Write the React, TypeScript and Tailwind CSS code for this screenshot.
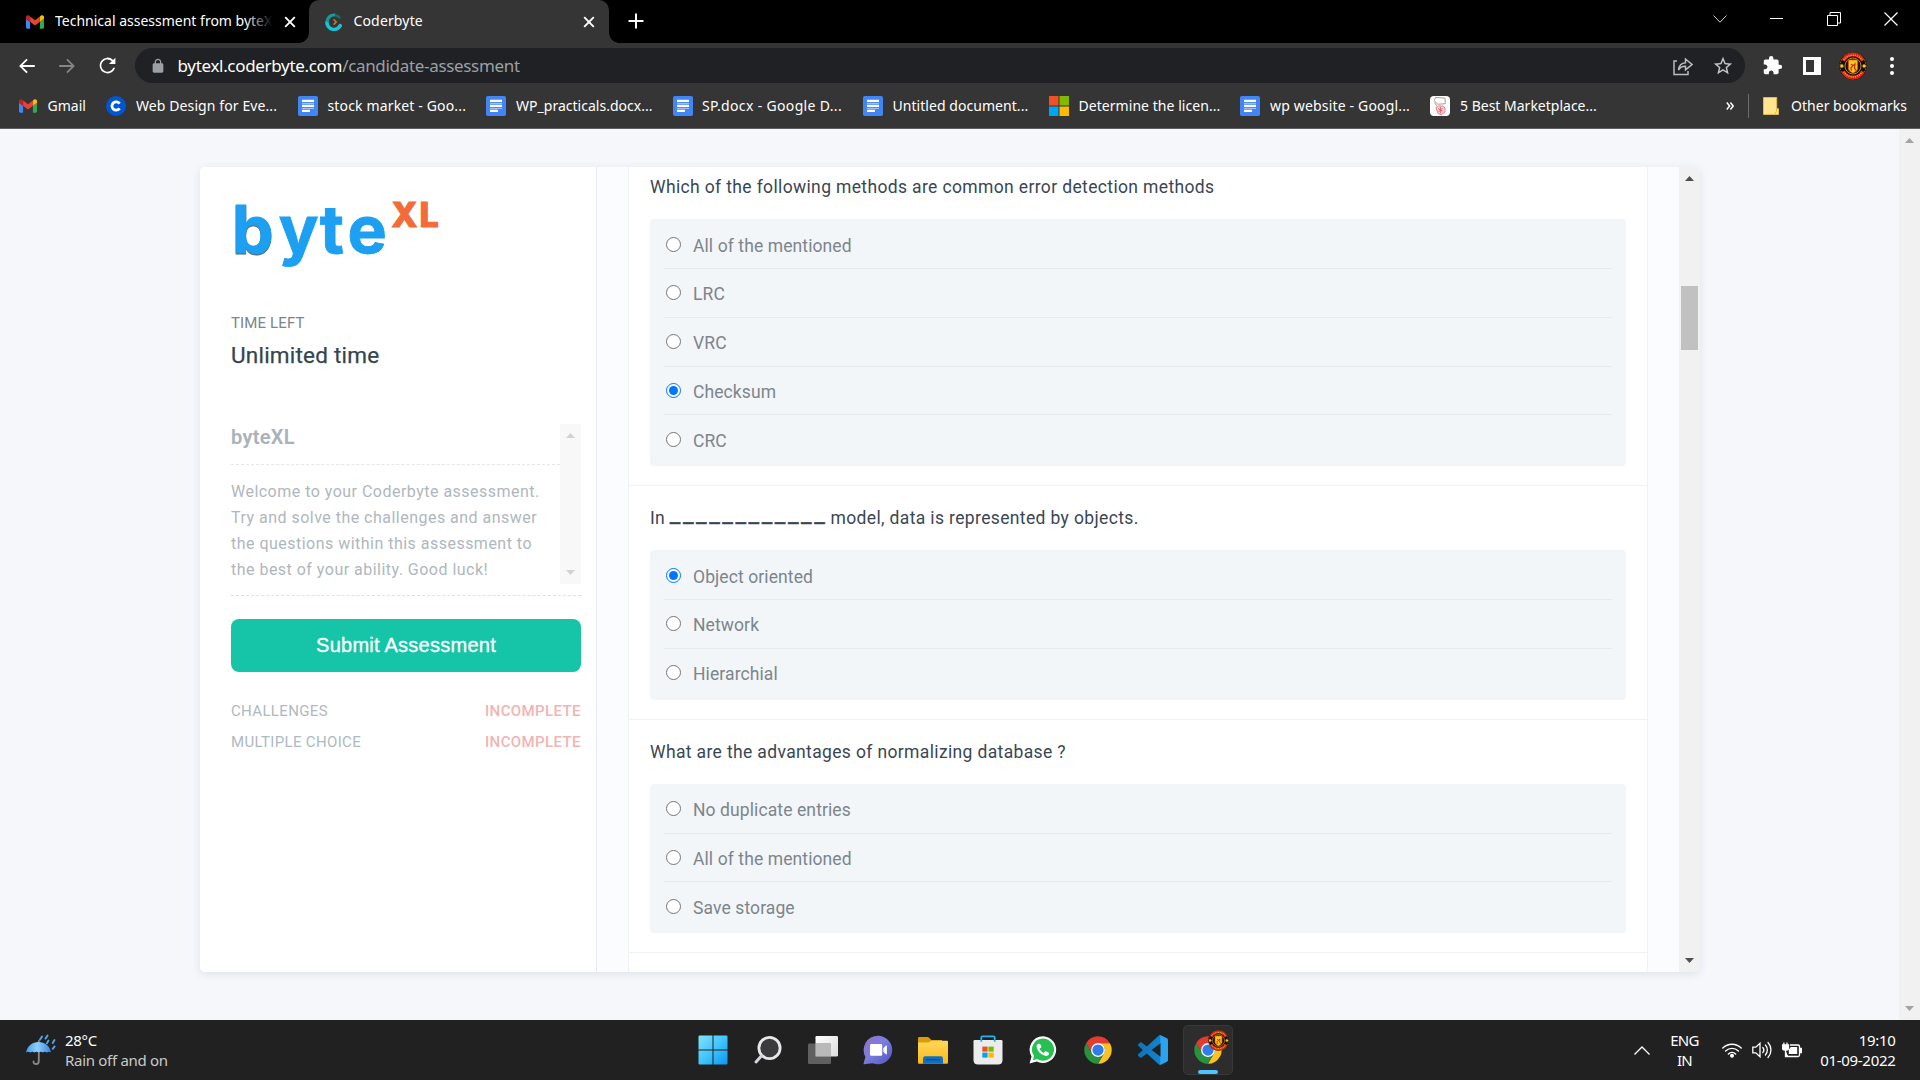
import type { ReactNode } from 'react';

/* ---------- icons ---------- */

const ChromeGlyph = ({ d, className }: { d: string; className: string }) => (
  <svg viewBox="0 0 24 24" className={className} fill="currentColor">
    <path d={d} />
  </svg>
);

const BACK = 'M20.5 11H7.2l5.6-5.6L11.4 4l-8 8 8 8 1.4-1.4L7.2 13h13.3z';
const FORWARD = 'M3.5 11h13.3l-5.6-5.6L12.6 4l8 8-8 8-1.4-1.4 5.6-5.6H3.5z';
const RELOAD =
  'M18.4 5.6A9 9 0 1 0 20.7 14.5h-2.2A7 7 0 1 1 12 5c1.9 0 3.6.8 4.9 2L13.6 10.4H21V3z';
const LOCK =
  'M18 8h-1V6c0-2.76-2.24-5-5-5S7 3.24 7 6v2H6c-1.1 0-2 .9-2 2v10c0 1.1.9 2 2 2h12c1.1 0 2-.9 2-2V10c0-1.1-.9-2-2-2zM9 6c0-1.66 1.34-3 3-3s3 1.34 3 3v2H9V6z';
const STAR =
  'M22 9.24l-7.19-.62L12 2 9.19 8.63 2 9.24l5.46 4.73L5.82 21 12 17.27 18.18 21l-1.63-7.03L22 9.24zM12 15.4l-3.76 2.27 1-4.28-3.32-2.88 4.38-.38L12 6.1l1.71 4.04 4.38.38-3.32 2.88 1 4.28L12 15.4z';
const PUZZLE =
  'M20.5 11H19V7c0-1.1-.9-2-2-2h-4V3.5a2.5 2.5 0 0 0-5 0V5H4c-1.1 0-1.99.9-1.99 2v3.8H3.5c1.49 0 2.7 1.21 2.7 2.7s-1.21 2.7-2.7 2.7H2V20c0 1.1.9 2 2 2h3.8v-1.5c0-1.49 1.21-2.7 2.7-2.7 1.49 0 2.7 1.21 2.7 2.7V22H17c1.1 0 2-.9 2-2v-4h1.5a2.5 2.5 0 0 0 0-5z';

const GmailIcon = () => (
  <svg viewBox="0 0 24 18" className="h-[14px] w-[18px] shrink-0">
    <path fill="#4285f4" d="M1.6 18H5.45V8.73L0 4.64V16.4c0 .9.73 1.6 1.6 1.6z" />
    <path fill="#34a853" d="M18.55 18h3.8c.9 0 1.65-.73 1.65-1.6V4.64l-5.45 4.09z" />
    <path fill="#fbbc04" d="M18.55 1.64v7.09L24 4.64V2.45c0-2-2.3-3.2-3.93-1.96z" />
    <path fill="#ea4335" d="M5.45 8.73V1.64L12 6.55l6.55-4.91v7.09L12 13.64z" />
    <path fill="#c5221f" d="M0 2.45v2.19l5.45 4.09V1.64L3.93.49C2.3-.73 0 .43 0 2.45z" />
  </svg>
);

const CoderbyteIcon = () => (
  <svg viewBox="0 0 18 18" className="h-[18px] w-[18px] shrink-0" fill="none">
    <path d="M15.2 12.6A7 7 0 0 1 2 9" stroke="#17c3d6" strokeWidth="3.6" strokeLinecap="round" />
    <path d="M2 9a7 7 0 0 1 8-6.9" stroke="#1b9a9c" strokeWidth="3.2" />
    <path d="M10 2.1a7 7 0 0 1 5 3" stroke="#1d6f72" strokeWidth="2.4" />
    <path d="M8.6 6.4L11.2 9l-2.6 2.6" stroke="#b5813c" strokeWidth="1.5" />
  </svg>
);

const CourseraIcon = () => (
  <svg viewBox="0 0 20 20" className="h-5 w-5 shrink-0">
    <circle cx="10" cy="10" r="10" fill="#0056d2" />
    <path d="M13.6 7.6a4.2 4.2 0 1 0 0 4.8" fill="none" stroke="#fff" strokeWidth="2.8" />
  </svg>
);

const DocsIcon = () => (
  <svg viewBox="0 0 20 20" className="h-5 w-5 shrink-0">
    <rect width="20" height="20" rx="1.8" fill="#4285f4" />
    <path d="M4 4.9h12M4 9.9h12M4 14.9h8" stroke="#fff" strokeWidth="2.2" />
    <path d="M4 7.4h12M4 12.4h12" stroke="#a9c8fb" strokeWidth="1" />
  </svg>
);

const MicrosoftIcon = () => (
  <svg viewBox="0 0 20 20" className="h-5 w-5 shrink-0">
    <rect x="0" y="0" width="9.5" height="9.5" fill="#f25022" />
    <rect x="10.5" y="0" width="9.5" height="9.5" fill="#7fba00" />
    <rect x="0" y="10.5" width="9.5" height="9.5" fill="#00a4ef" />
    <rect x="10.5" y="10.5" width="9.5" height="9.5" fill="#ffb900" />
  </svg>
);

const MarketIcon = () => (
  <svg viewBox="0 0 20 20" className="h-5 w-5 shrink-0" fill="none">
    <rect width="20" height="20" rx="4" fill="#fff" />
    <path d="M5.5 1.5l9.5.6.3 5.6-7.600.6-3.400-3.600z" stroke="#b59a8d" strokeWidth="1" />
    <path d="M4.500 6.500l2.500 4" stroke="#b59a8d" strokeWidth="1" />
    <path d="M6 11.500l2.500-1.500h4.500l2 2v4L11 19l-3.200-1.800z" fill="#fbd3d7" stroke="#e8808c" strokeWidth="1" />
    <path d="M8 12.500l4.500 2.500M8.600 16l4-4M10.400 11v6.500" stroke="#e35b6b" strokeWidth=".9" />
  </svg>
);

const FolderTabIcon = () => (
  <svg viewBox="0 0 16 18" className="h-[18px] w-4 shrink-0">
    <path d="M.5.5h13.2v11.2h1.8v5.8H.5z" fill="#ffe58f" stroke="#e2bb45" strokeWidth="1" />
    <path d="M13.5 12v2.6l-2.2 2.9" fill="none" stroke="#e2bb45" strokeWidth="1" />
  </svg>
);

const Crest = ({ className }: { className: string }) => (
  <svg viewBox="0 0 28 28" className={className}>
    <circle cx="14" cy="14" r="13.8" fill="#170c05" />
    <circle cx="14" cy="14" r="12.9" fill="none" stroke="#d9a520" strokeWidth=".7" strokeDasharray="1.4 1" />
    <path d="M4 8.600A11.300 11.300 0 0 1 24 8.600" fill="none" stroke="#dc2416" strokeWidth="4" />
    <path d="M4 19.400A11.300 11.300 0 0 0 24 19.400" fill="none" stroke="#dc2416" strokeWidth="4" />
    <path d="M4.800 8.200A10.900 10.900 0 0 1 23.200 8.200M4.800 19.800A10.900 10.900 0 0 0 23.200 19.800" fill="none" stroke="#f0b429" strokeWidth="1.500" strokeDasharray="1.1 1" />
    <circle cx="2.9" cy="14" r="1.7" fill="#f4c531" />
    <circle cx="25.1" cy="14" r="1.7" fill="#f4c531" />
    <circle cx="14" cy="14" r="8" fill="none" stroke="#e0a81f" strokeWidth=".8" />
    <path d="M9.200 7.800h9.600v8.600q0 2.800-4.800 5-4.800-2.200-4.800-5z" fill="#f8c51c" stroke="#b71c10" strokeWidth=".7" />
    <path d="M12 12.200l2 1.400 2-1.600-.5 3.800 1.200 2.600M13.800 13.600l-1.900 2.200.6 2.800" fill="none" stroke="#cc2a12" strokeWidth="1.200" />
  </svg>
);

const ChromeIcon = () => (
  <svg viewBox="0 0 48 48" className="h-[30px] w-[30px]">
    <path fill="#e33b2e" d="M24 13H43.05A22 22 0 0 0 4.95 13L14.47 29.5A11 11 0 0 1 24 13z" />
    <path fill="#fcc31e" d="M24 13H43.05A22 22 0 0 1 24 46L33.53 29.5A11 11 0 0 0 24 13z" />
    <path fill="#27933f" d="M14.47 29.5L4.95 13A22 22 0 0 0 24 46L33.53 29.5A11 11 0 0 1 14.47 29.5z" />
    <circle cx="24" cy="24" r="11.2" fill="#fff" />
    <circle cx="24" cy="24" r="9" fill="#2f7de9" />
  </svg>
);

const WindowsIcon = () => (
  <svg viewBox="0 0 30 30" className="h-[30px] w-[30px]">
    <defs>
      <linearGradient id="win" x1="0" y1="0" x2="30" y2="30" gradientUnits="userSpaceOnUse">
        <stop offset="0" stopColor="#86e4fb" />
        <stop offset=".5" stopColor="#41c5fb" />
        <stop offset="1" stopColor="#0a92f3" />
      </linearGradient>
    </defs>
    <path
      fill="url(#win)"
      d="M1.5.5H14.5V14.5H.5V1.5q0-1 1-1zM15.5.5H28.5q1 0 1 1V14.5H15.5zM.5 15.5H14.5V29.5H1.5q-1 0-1-1zM15.5 15.5H29.5V28.5q0 1-1 1H15.5z"
    />
  </svg>
);

const SearchIcon = () => (
  <svg viewBox="0 0 30 30" className="h-[30px] w-[30px]" fill="none">
    <circle cx="16.5" cy="13" r="10.6" fill="#3b3b3d" stroke="#e6e8ea" strokeWidth="2.8" />
    <path d="M8.8 20.6L3 27" stroke="#d3d7db" strokeWidth="3" strokeLinecap="round" />
  </svg>
);

const TaskViewIcon = () => (
  <svg viewBox="0 0 30 30" className="h-[30px] w-[30px]">
    <defs>
      <linearGradient id="tv" x1="0" y1="0" x2="1" y2="1">
        <stop offset="0" stopColor="#fff" />
        <stop offset="1" stopColor="#dcdcdc" />
      </linearGradient>
    </defs>
    <rect x="7.5" y="1" width="22.5" height="20.5" rx="1.2" fill="url(#tv)" />
    <rect x="0" y="8.5" width="23" height="20.5" rx="1.2" fill="#6b6b6b" fillOpacity=".85" />
    <path d="M7.5 8.5H22q1 0 1 1v12H7.5z" fill="#b9b9b9" />
  </svg>
);

const ChatIcon = () => (
  <svg viewBox="0 0 30 30" className="h-[30px] w-[30px]">
    <defs>
      <linearGradient id="chat" x1="0" y1="0" x2="1" y2="1">
        <stop offset="0" stopColor="#9a6dc4" />
        <stop offset=".45" stopColor="#7a7fe0" />
        <stop offset="1" stopColor="#4f52b8" />
      </linearGradient>
    </defs>
    <path d="M15 .8a14.2 14.2 0 1 1-5.2 27.4L1 29.3q-.7 0-.4-.8l1.8-6.6A14.2 14.2 0 0 1 15 .8z" fill="url(#chat)" />
    <rect x="7" y="9" width="12.2" height="11.8" rx="1.4" fill="#fff" />
    <path d="M20.3 13.2l2.6-2.6q1-.6 1 .5v7.6q0 1.1-1 .5l-2.6-2.4z" fill="#fff" />
  </svg>
);

const ExplorerIcon = () => (
  <svg viewBox="0 0 30 30" className="h-[30px] w-[30px]">
    <defs>
      <linearGradient id="fold" x1="0" y1="0" x2="0" y2="1">
        <stop offset="0" stopColor="#ffd75e" />
        <stop offset="1" stopColor="#fbb917" />
      </linearGradient>
    </defs>
    <path d="M0 3.4Q0 2 1.4 2h8q1 0 1.7.7L13.4 5H24v5H0z" fill="#dd9b05" />
    <path d="M0 7.6h10.6l2.6-1.8H29q1 0 1 1v21q0 1-1 1H1q-1 0-1-1z" fill="url(#fold)" />
    <path d="M5 28.8v-5.4q0-2.2 2.2-2.2h15.6q2.2 0 2.2 2.2v5.4z" fill="#0f6fc0" />
    <path d="M8.6 24.6h12.8" stroke="#0a4a8a" strokeWidth="1.1" strokeLinecap="round" />
  </svg>
);

const StoreIcon = () => (
  <svg viewBox="0 0 30 30" className="h-[30px] w-[30px]">
    <path d="M.5 6.2q0-1.2 1.2-1.2h26.6q1.2 0 1.2 1.2V25q0 4.6-4.6 4.6H5.1Q.5 29.6.5 25z" fill="#ececec" />
    <path d="M8.3 6.8V2.400q0-1.100 1.100-1.100h11.200q1.100 0 1.100 1.100v4.400" fill="none" stroke="#22b1e8" strokeWidth="1.8" />
    <rect x="9.3" y="11.6" width="5.3" height="5" fill="#ee4f24" />
    <rect x="15.4" y="11.6" width="5.3" height="5" fill="#7eb801" />
    <rect x="9.3" y="17.6" width="5.3" height="5" fill="#02a3ee" />
    <rect x="15.4" y="17.6" width="5.3" height="5" fill="#ffb801" />
  </svg>
);

const WhatsAppIcon = () => (
  <svg viewBox="0 0 30 30" className="h-[30px] w-[30px]">
    <path d="M15 1.2a13.4 13.4 0 1 1-6.4 25.3L1.6 28.4l1.9-7A13.4 13.4 0 0 1 15 1.2z" fill="#fff" />
    <path d="M15 3.5a11.1 11.1 0 1 1-5.8 20.6l-4.3 1.2 1.2-4.2A11.1 11.1 0 0 1 15 3.5z" fill="#27c052" />
    <path
      transform="translate(7.2 6.8) scale(.64)"
      d="M6.62 10.79c1.44 2.83 3.76 5.14 6.59 6.59l2.2-2.2c.27-.27.67-.36 1.02-.24l4.2 1.6c.55.2.8.6.8 1.2V19c0 1.6-2 3-4.4 3C9.4 21 3 14 2.2 7.6 2 5 3.6 3 5.4 3h1.4c.6 0 1 .3 1.2.8l1.6 4c.11.35.03.74-.25 1.02z"
      fill="#fff"
    />
  </svg>
);

const VSCodeIcon = () => (
  <svg viewBox="0 0 24 24" className="h-[30px] w-[30px]">
    <defs>
      <linearGradient id="vs" x1="0" y1="0" x2="1" y2="0">
        <stop offset="0" stopColor="#0f74b8" />
        <stop offset=".72" stopColor="#1382cc" />
        <stop offset=".76" stopColor="#29a4f2" />
        <stop offset="1" stopColor="#2aa2ee" />
      </linearGradient>
    </defs>
    <path
      fill="url(#vs)"
      d="M23.15 2.587L18.21.21a1.494 1.494 0 0 0-1.705.29l-9.46 8.63-4.12-3.128a.999.999 0 0 0-1.276.057L.327 7.261A1 1 0 0 0 .326 8.74L3.899 12 .326 15.26a1 1 0 0 0 .001 1.479L1.65 17.94a.999.999 0 0 0 1.276.057l4.12-3.128 9.46 8.63a1.492 1.492 0 0 0 1.704.29l4.942-2.377A1.5 1.5 0 0 0 24 20.06V3.939a1.5 1.5 0 0 0-.85-1.352zm-5.146 14.861L10.826 12l7.178-5.448v10.896z"
    />
  </svg>
);

const UmbrellaIcon = () => (
  <svg viewBox="0 0 30 32" className="h-8 w-[30px] shrink-0" fill="none">
    <defs>
      <linearGradient id="umb" x1="0" y1="0" x2="1" y2="0">
        <stop offset="0" stopColor="#3f9bf0" />
        <stop offset=".45" stopColor="#8fd0fb" />
        <stop offset="1" stopColor="#2f86e6" />
      </linearGradient>
    </defs>
    <path d="M12.8 7v20q0 3-2.7 3t-2.6-2.6" stroke="#8b8488" strokeWidth="1.9" strokeLinecap="round" />
    <path d="M0 18.6C1.4 11.8 6.4 8 12.6 8s11.2 3.8 12.5 10.6q-2.1-1.6-4.2 0-2.1-1.6-4.1 0-2-1.6-4.2 0-2-1.6-4.1 0-2.1-1.6-4.2 0-2.2-1.6-4.3 0z" fill="url(#umb)" />
    <path d="M16 2.6l-2 3M21.5 1.6l-2 3M22.5 6.6l-1.6 2.6M28.5 6l-1.8 3M28.6 12.4l-1.9 2.4" stroke="#4da3ee" strokeWidth="1.9" strokeLinecap="round" />
  </svg>
);

const CloseX = () => (
  <svg viewBox="0 0 12 12" className="h-3 w-3 shrink-0">
    <path d="M1.2 1.2l9.6 9.6M10.8 1.2L1.2 10.8" stroke="#fff" strokeWidth="1.9" />
  </svg>
);

/* ---------- browser chrome ---------- */

const TabStrip = () => (
  <div className="flex h-[43px] bg-black text-[14px] text-white">
    <div className="flex w-[309px] items-center pl-[26px] pr-[13px]">
      <GmailIcon />
      <div className="relative mb-0.5 ml-[11px] w-[218px] overflow-hidden whitespace-nowrap leading-5">
        Technical assessment from byteX
        <span className="absolute inset-y-0 right-0 w-7 bg-gradient-to-r from-transparent to-black" />
      </div>
      <span className="ml-auto">
        <CloseX />
      </span>
    </div>
    <div className="relative flex w-[300px] items-center rounded-t-[10px] bg-[#353535] pl-4 pr-[14px]">
      <span className="absolute -left-[10px] bottom-0 h-[10px] w-[10px] bg-[radial-gradient(circle_at_0_0,#000_9.5px,#353535_10px)]" />
      <span className="absolute -right-[10px] bottom-0 h-[10px] w-[10px] bg-[radial-gradient(circle_at_100%_0,#000_9.5px,#353535_10px)]" />
      <CoderbyteIcon />
      <span className="mb-0.5 ml-[10.5px] leading-5 tracking-[0.15px]">Coderbyte</span>
      <span className="ml-auto">
        <CloseX />
      </span>
    </div>
    <svg viewBox="0 0 16 16" className="ml-[19px] mt-[13px] h-4 w-4">
      <path d="M8 .5v15M.5 8h15" stroke="#fff" strokeWidth="2" />
    </svg>
    <div className="ml-auto flex h-[37px] items-center">
      <span className="grid w-[57px] place-items-center">
        <svg viewBox="0 0 14 8" className="h-2 w-[14px]" fill="none" stroke="#d0d0d0">
          <path d="M.5.5L7 7.2 13.5.5" />
        </svg>
      </span>
      <span className="grid w-[57px] place-items-center">
        <span className="h-px w-[13px] bg-white" />
      </span>
      <span className="grid w-[57px] place-items-center">
        <svg viewBox="0 0 14 14" className="h-[14px] w-[14px]" fill="none" stroke="#fff">
          <path d="M.5 3.5h10v10H.5zM3 3V.5h10.5V11H11" />
        </svg>
      </span>
      <span className="grid w-[58px] place-items-center">
        <svg viewBox="0 0 14 14" className="h-[14px] w-[14px]" fill="none" stroke="#fff" strokeWidth="1.2">
          <path d="M.5.5l13 13M13.5.5l-13 13" />
        </svg>
      </span>
    </div>
  </div>
);

const Toolbar = () => (
  <div className="flex h-[45px] items-center bg-[#353535] pl-[7px] text-white">
    <span className="grid w-10 place-items-center">
      <ChromeGlyph d={BACK} className="h-[22px] w-[22px]" />
    </span>
    <span className="grid w-10 place-items-center text-[#868686]">
      <ChromeGlyph d={FORWARD} className="h-[22px] w-[22px]" />
    </span>
    <span className="grid w-10 place-items-center">
      <ChromeGlyph d={RELOAD} className="h-[21px] w-[21px]" />
    </span>
    <div className="ml-2 flex h-[35px] w-[1610px] items-center rounded-full bg-[#202124] pl-[14.5px] pr-[11px]">
      <ChromeGlyph d={LOCK} className="h-4 w-4 text-[#9aa0a6]" />
      <span className="ml-3 whitespace-nowrap text-[17px] leading-6 tracking-[-0.32px]">
        bytexl.coderbyte.com<span className="text-[#9aa0a6]">/candidate-assessment</span>
      </span>
      <svg viewBox="0 0 20 20" className="ml-auto h-5 w-5" fill="none" stroke="#b9bbbe" strokeWidth="1.5">
        <path d="M4 5H1v13.5h14V15" />
        <path d="M5.5 14c.5-4.5 3-7 7-7.3V3l6.5 5.5-6.5 5.3v-3.5c-3-.2-5.3 1-7 3.7z" />
      </svg>
      <ChromeGlyph d={STAR} className="ml-[19px] h-[22px] w-[22px] text-[#c4c7c5]" />
    </div>
    <span className="ml-[7px] grid w-10 place-items-center">
      <ChromeGlyph d={PUZZLE} className="h-[21px] w-[21px]" />
    </span>
    <span className="grid w-10 place-items-center">
      <span className="h-[18px] w-[18px] border-y-[3px] border-l-[3px] border-r-[7px] border-white" />
    </span>
    <span className="grid w-[41px] place-items-center">
      <Crest className="h-7 w-7" />
    </span>
    <span className="grid w-[38px] place-items-center">
      <svg viewBox="0 0 4 18" className="h-[18px] w-1" fill="#fff">
        <circle cx="2" cy="2" r="2" />
        <circle cx="2" cy="9" r="2" />
        <circle cx="2" cy="16" r="2" />
      </svg>
    </span>
  </div>
);

const bookmarks: { icon: ReactNode; label: string; width: string; text: string }[] = [
  { icon: <GmailIcon />, label: 'Gmail', width: 'w-[87px]', text: 'ml-[10.5px]' },
  { icon: <CourseraIcon />, label: 'Web Design for Eve...', width: 'w-[192px]', text: 'ml-[10px] tracking-[0.1px]' },
  { icon: <DocsIcon />, label: 'stock market - Goo...', width: 'w-[188px]', text: 'ml-[9.5px] tracking-[0.15px]' },
  { icon: <DocsIcon />, label: 'WP_practicals.docx...', width: 'w-[187px]', text: 'ml-[10px] tracking-[0.02px]' },
  { icon: <DocsIcon />, label: 'SP.docx - Google D...', width: 'w-[190px]', text: 'ml-[9px] tracking-[0.34px]' },
  { icon: <DocsIcon />, label: 'Untitled document...', width: 'w-[186px]', text: 'ml-[9.5px] tracking-[0.05px]' },
  { icon: <MicrosoftIcon />, label: 'Determine the licen...', width: 'w-[191px]', text: 'ml-[9.5px] tracking-[0.05px]' },
  { icon: <DocsIcon />, label: 'wp website - Googl...', width: 'w-[190px]', text: 'ml-[10px] tracking-[0.17px]' },
  { icon: <MarketIcon />, label: '5 Best Marketplace...', width: 'w-[190px]', text: 'ml-[10px]' },
];

const BookmarksBar = () => (
  <div className="flex h-[41px] items-start border-b border-[#5f5f5f] bg-[#353535] pl-[19px] pr-[13px] pt-2 text-[14px] leading-5 text-white">
    {bookmarks.map((b) => (
      <div key={b.label} className={`flex h-5 items-center ${b.width}`}>
        {b.icon}
        <span className={`whitespace-nowrap ${b.text}`}>{b.label}</span>
      </div>
    ))}
    <div className="ml-auto flex h-5 items-center">
      <svg viewBox="0 0 8 8" className="h-2 w-2" fill="none" stroke="#fff" strokeWidth="1.5">
        <path d="M.8.6L3.6 4 .8 7.4M4.4.6L7.2 4 4.4 7.4" />
      </svg>
      <span className="ml-[14px] h-6 w-px bg-[#6b6b6b]" />
      <span className="ml-[14px] flex">
        <FolderTabIcon />
      </span>
      <span className="ml-3 whitespace-nowrap">Other bookmarks</span>
    </div>
  </div>
);

/* ---------- scrollbars ---------- */

const Arrow = ({ up, color }: { up?: boolean; color: string }) => (
  <svg viewBox="0 0 9 5" className="h-[5px] w-[9px]" fill={color}>
    <path d={up ? 'M4.5 0L9 5H0z' : 'M4.5 5L9 0H0z'} />
  </svg>
);

/* ---------- assessment page ---------- */

const Logo = () => (
  <svg viewBox="-5 -20 225 106" className="-ml-[5px] h-[106px] w-[225px] shrink-0 overflow-visible" fontFamily="Inter, sans-serif" fontWeight="700">
    <g fill="#1d9ff2" stroke="#1d9ff2" strokeWidth=".9" fontSize="66">
      <text x="1" y="59.3" fill="#56616d" stroke="#56616d">b</text>
      <text x="1" y="57.8">b</text>
      <text x="47.8" y="57.8">y</text>
      <text x="88.8" y="57.8">t</text>
      <text x="116.5" y="57.8">e</text>
    </g>
    <g fill="#f26b38" stroke="#f26b38" strokeWidth="1.1" fontSize="34" fontWeight="800">
      <text x="160.6" y="31.6">X</text>
      <text x="188.4" y="31.6">L</text>
    </g>
  </svg>
);

const StatusRow = ({ label }: { label: string }) => (
  <div className="flex h-[31px] items-center justify-between text-[15px]">
    <span className="tracking-[0.35px] text-[#b0b9c0]">{label}</span>
    <span className="font-medium tracking-[0.4px] text-[#f2b3b3]">INCOMPLETE</span>
  </div>
);

const Sidebar = () => (
  <aside className="flex w-[397px] flex-col border-r border-[#e6e9ef] bg-white pl-[31px] pr-[15px] pt-2">
    <Logo />
    <div className="mt-8 text-[15px] leading-5 tracking-[0.15px] text-[#7b858d]">TIME LEFT</div>
    <div className="mt-[7px] text-[22.5px] leading-[30px] tracking-[0.22px] text-[#33454f] [-webkit-text-stroke:0.25px_#33454f]">
      Unlimited time
    </div>
    <div className="mt-[54px] flex h-40">
      <div className="flex-1">
        <div className="h-[41px] border-b border-dashed border-[#e4e7e9] pt-px text-[20px] font-semibold leading-6 tracking-[0.3px] text-[#a9b2b9]">
          byteXL
        </div>
        <div className="pt-[13.5px] text-[16px] leading-[26px] tracking-[0.48px] text-[#afb7bd]">
          <div>Welcome to your Coderbyte assessment.</div>
          <div>Try and solve the challenges and answer</div>
          <div>the questions within this assessment to</div>
          <div>the best of your ability. Good luck!</div>
        </div>
      </div>
      <div className="flex w-[21px] flex-col items-center justify-between bg-[#f8f8f8] py-[9px]">
        <Arrow up color="#d2d2d2" />
        <Arrow color="#d2d2d2" />
      </div>
    </div>
    <div className="mt-[11px] border-b border-dashed border-[#dfe2e5]" />
    <button className="mt-[23px] h-[53px] rounded-lg bg-[#16c5a8] pb-[2px] font-['Liberation_Sans',sans-serif] text-[20px] tracking-[0.25px] text-white [-webkit-text-stroke:0.3px_#fff]">
      Submit Assessment
    </button>
    <div className="mt-6">
      <StatusRow label="CHALLENGES" />
      <StatusRow label="MULTIPLE CHOICE" />
    </div>
  </aside>
);

const Radio = ({ checked }: { checked: boolean }) =>
  checked ? (
    <span className="grid h-[15px] w-[15px] place-items-center rounded-full border border-[#0075ff] bg-white">
      <span className="h-[9px] w-[9px] rounded-full bg-[#0075ff]" />
    </span>
  ) : (
    <span className="h-[15px] w-[15px] rounded-full border border-[#767676] bg-white" />
  );

const Question = ({ title, options, selected }: { title: ReactNode; options: string[]; selected?: number }) => (
  <section className="border-b border-[#f0f2f4] px-[21px] pb-[18.8px]">
    <h2 className="flex h-16 items-center whitespace-pre pt-px text-[17.5px] tracking-[0.36px] text-[#3a4653]">{title}</h2>
    <div className="rounded bg-[#f2f6f9] px-[14px] pb-[2.25px] pt-[1.25px]">
      {options.map((o, i) => (
        <div
          key={o}
          className="flex h-[48.75px] items-center border-b border-[#e6eaed] pl-0.5 text-[17.5px] text-[#7d858c] last:border-transparent"
        >
          <Radio checked={selected === i} />
          <span className="ml-3 pt-[3px] tracking-[0.1px]">{o}</span>
        </div>
      ))}
    </div>
  </section>
);

const Blank = () => (
  <span className="mr-[-1.5px] -translate-y-[4px] text-[23.5px] leading-none tracking-[2.52px] [-webkit-text-stroke:0.4px_#3a4653]">____________</span>
);

const Assessment = () => (
  <main className="flex h-[891px] bg-[#f5f7fb] font-[Roboto,sans-serif]">
    <div className="ml-[200px] mt-[38px] flex h-[805px] w-[1500px] overflow-hidden rounded-[5px] bg-[#fbfcff] shadow-[0_2px_8px_rgba(60,70,90,0.12)]">
      <Sidebar />
      <div className="flex-1" />
      <div className="w-[1020px] overflow-hidden border-x border-[#eff1f5] bg-white">
        <div className="-mt-3">
          <Question
            title="Which of the following methods are common error detection methods"
            options={['All of the mentioned', 'LRC', 'VRC', 'Checksum', 'CRC']}
            selected={3}
          />
          <Question
            title={
              <>
                {'In '}
                <Blank />
                {' model, data is represented by objects.'}
              </>
            }
            options={['Object oriented', 'Network', 'Hierarchial']}
            selected={0}
          />
          <Question
            title="What are the advantages of normalizing database ?"
            options={['No duplicate entries', 'All of the mentioned', 'Save storage']}
          />
        </div>
      </div>
      <div className="w-[31px]" />
      <div className="flex w-[21px] flex-col items-center bg-[#f1f1f1] py-[9px]">
        <Arrow up color="#505050" />
        <div className="mt-[105px] h-16 w-[17px] bg-[#c1c1c1]" />
        <div className="mt-auto">
          <Arrow color="#505050" />
        </div>
      </div>
    </div>
    <div className="ml-auto flex w-[21px] flex-col items-center justify-between bg-[#f1f1f1] py-[9px]">
      <Arrow up color="#a3a3a3" />
      <Arrow color="#a3a3a3" />
    </div>
  </main>
);

/* ---------- taskbar ---------- */

const apps: ReactNode[] = [
  <WindowsIcon />,
  <SearchIcon />,
  <TaskViewIcon />,
  <ChatIcon />,
  <ExplorerIcon />,
  <StoreIcon />,
  <WhatsAppIcon />,
  <ChromeIcon />,
  <VSCodeIcon />,
];

const Taskbar = () => (
  <footer className="flex h-[60px] items-center bg-[#212121] text-[15px] leading-5 tracking-[-0.3px] text-white">
    <div className="flex w-[685px] items-center pl-[26px]">
      <UmbrellaIcon />
      <div className="ml-[9px]">
        <div>28°C</div>
        <div className="text-[#c9c9c9]">Rain off and on</div>
      </div>
    </div>
    {apps.map((icon, i) => (
      <div key={i} className="grid w-[55px] place-items-center">
        {icon}
      </div>
    ))}
    <div className="grid w-[55px] place-items-center">
      <div className="relative grid h-[50px] w-[50px] place-items-center rounded-[5px] border border-[#383838] bg-[#2d2d2d]">
        <ChromeIcon />
        <span className="absolute right-[3px] top-[4px]">
          <Crest className="h-[21px] w-[21px]" />
        </span>
        <span className="absolute bottom-0 h-1 w-5 rounded-full bg-[#4cc2ff]" />
      </div>
    </div>
    <div className="ml-auto flex items-center pr-[24.5px]">
      <svg viewBox="0 0 16 9" className="h-[9px] w-4" fill="none" stroke="#fff" strokeWidth="1.3">
        <path d="M.5 8.5L8 1l7.5 7.5" />
      </svg>
      <div className="ml-[15px] w-10 text-center tracking-[-0.7px]">
        <div>ENG</div>
        <div>IN</div>
      </div>
      <svg viewBox="0 0 20 16" className="ml-[17px] h-4 w-5" fill="none" stroke="#fff" strokeWidth="1.4" strokeLinecap="round">
        <path d="M.8 6a13 13 0 0 1 18.4 0M3.6 9a9 9 0 0 1 12.8 0M6.4 12a5.2 5.2 0 0 1 7.2 0" />
        <circle cx="10" cy="13.8" r="1.3" fill="#fff" />
      </svg>
      <svg viewBox="0 0 20 18" className="ml-[10px] h-[18px] w-5" fill="none" stroke="#fff" strokeWidth="1.3">
        <path d="M.8 6.2v5.6h3l4.2 4V2.2l-4.2 4z" />
        <path d="M10.8 6.4a4 4 0 0 1 0 5.2M13.4 4a7.4 7.4 0 0 1 0 10M16 1.5a11 11 0 0 1 0 15" strokeLinecap="round" />
      </svg>
      <svg viewBox="0 0 20 18" className="ml-[10px] h-[18px] w-5" fill="none" stroke="#fff" strokeWidth="1.3">
        <path d="M8 4h8q1.5 0 1.5 1.5v8.5q0 1.5-1.5 1.5H6.5q-1.5 0-1.5-1.5" />
        <path d="M18 7.5h1.5v4H18z" fill="#fff" />
        <path d="M6.8 8.5l2-2.4h6.4v7H6.8z" fill="#fff" stroke="none" />
        <path d="M.5 4h6v3q0 2-2 2h-2q-2 0-2-2zM1.9 1.5V4M5 1.5V4M3.5 9v6.500H6" fill="#fff" />
      </svg>
      <div className="ml-[14px] w-20 whitespace-nowrap text-right">
        <div>19:10</div>
        <div>01-09-2022</div>
      </div>
    </div>
  </footer>
);

export default function App() {
  return (
    <div className="flex h-[1080px] w-[1920px] flex-col overflow-hidden font-['Noto_Sans',sans-serif]">
      <TabStrip />
      <Toolbar />
      <BookmarksBar />
      <Assessment />
      <Taskbar />
    </div>
  );
}
